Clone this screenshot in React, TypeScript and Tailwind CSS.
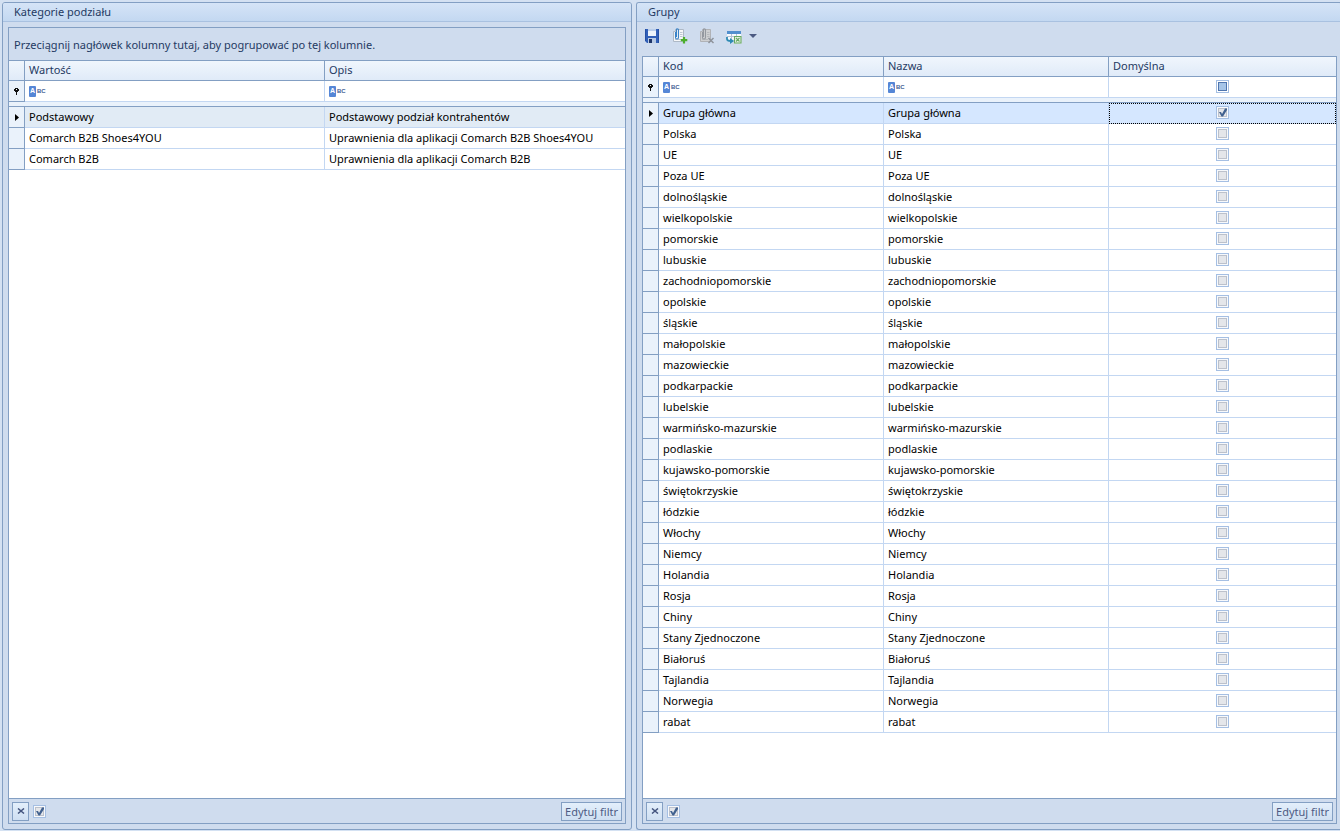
import type { ReactNode } from 'react'
import clsx from 'clsx'

const categories = [
  ['Podstawowy', 'Podstawowy podział kontrahentów'],
  ['Comarch B2B Shoes4YOU', 'Uprawnienia dla aplikacji Comarch B2B Shoes4YOU'],
  ['Comarch B2B', 'Uprawnienia dla aplikacji Comarch B2B'],
]

const groups = [
  'Grupa główna',
  'Polska',
  'UE',
  'Poza UE',
  'dolnośląskie',
  'wielkopolskie',
  'pomorskie',
  'lubuskie',
  'zachodniopomorskie',
  'opolskie',
  'śląskie',
  'małopolskie',
  'mazowieckie',
  'podkarpackie',
  'lubelskie',
  'warmińsko-mazurskie',
  'podlaskie',
  'kujawsko-pomorskie',
  'świętokrzyskie',
  'łódzkie',
  'Włochy',
  'Niemcy',
  'Holandia',
  'Rosja',
  'Chiny',
  'Stany Zjednoczone',
  'Białoruś',
  'Tajlandia',
  'Norwegia',
  'rabat',
]

function CheckBox({ label, checked, mixed }: { label: string; checked?: boolean; mixed?: boolean }) {
  return (
    <span className="relative block size-[13px]">
      <input
        type="checkbox"
        aria-label={label}
        defaultChecked={checked}
        className={clsx(
          'peer block size-[13px] appearance-none border border-[#a5bfe3]',
          mixed
            ? 'bg-[#a6c5e8] shadow-[inset_0_0_0_1px_#ffffff,inset_0_0_0_2px_#4f75ae]'
            : 'bg-[#e4e6ea] shadow-[inset_0_0_0_1px_#f7f9fc,inset_0_0_0_2px_#bcc1cb]',
        )}
      />
      <svg
        viewBox="0 0 13 13"
        className="pointer-events-none absolute inset-0 hidden size-[13px] peer-checked:block"
        aria-hidden="true"
      >
        <path d="M3 6h2l1 2 3-5.500h2V4l-4 6.500H5.500z" fill="#41618f" />
      </svg>
    </span>
  )
}

function PinIcon() {
  return (
    <svg viewBox="0 0 5 7" className="mx-auto h-[7px] w-[5px]" shapeRendering="crispEdges" aria-hidden="true">
      <path d="M1 0h3v1h1v2H4v1H3v3H2V4H1V3H0V1h1z" fill="#111" />
      <path d="M2 1h1v1H2z" fill="#fff" />
    </svg>
  )
}

function RowArrow() {
  return (
    <svg viewBox="0 0 4 7" className="mx-auto h-[7px] w-[4px]" aria-hidden="true">
      <path d="M0 0 4 3.500 0 7z" fill="#000" />
    </svg>
  )
}

function FilterCell({ label }: { label: string }) {
  return (
    <div className="flex items-center pl-1">
      <span className="flex h-[11px] w-[7px] items-center justify-center rounded-[1px] bg-[#5586d6] font-['Liberation_Sans'] text-[7px] font-bold text-white">
        A
      </span>
      <span className="pl-px font-['Liberation_Sans'] text-[6px] font-bold text-[#3f6094]">BC</span>
      <input aria-label={label} className="h-4 min-w-0 flex-1 bg-transparent px-1 outline-none" />
    </div>
  )
}

const indicator = 'border-r border-b border-[#839fc3] bg-[#eaf2fb] p-0'
const cell = 'border-b border-[#c3d7f2] p-0 pl-1'

function HeaderRow({ titles }: { titles: string[] }) {
  return (
    <tr className="h-5 bg-linear-to-b from-[#f0f6fd] to-[#dfeaf8] text-[#1f3a63]">
      <th className="border-r border-b border-[#839fc3] p-0" />
      {titles.map((title) => (
        <th
          key={title}
          scope="col"
          className="border-r border-b border-[#839fc3] p-0 pb-[2px] pl-1 text-left font-normal last:border-r-0"
        >
          {title}
        </th>
      ))}
    </tr>
  )
}

function GapRow({ span }: { span: number }) {
  return (
    <tr className="h-[5px]">
      <td colSpan={span} className="border-b border-[#839fc3] bg-[#eaf2fb] p-0" />
    </tr>
  )
}

function CategoryTable() {
  return (
    <table className="w-full table-fixed border-separate border-spacing-0 leading-4">
      <colgroup>
        <col className="w-4" />
        <col className="w-[300px]" />
        <col />
      </colgroup>
      <thead>
        <HeaderRow titles={['Wartość', 'Opis']} />
      </thead>
      <tbody>
        <tr className="h-[21px]">
          <td className={indicator}>
            <PinIcon />
          </td>
          <td className="border-r border-b border-[#c3d7f2] p-0">
            <FilterCell label="Filtr: Wartość" />
          </td>
          <td className="border-b border-[#c3d7f2] p-0">
            <FilterCell label="Filtr: Opis" />
          </td>
        </tr>
        <GapRow span={3} />
        {categories.map(([value, description], i) => (
          <tr key={value} className="h-[21px]">
            <td className={indicator}>{i === 0 && <RowArrow />}</td>
            <td className={clsx(cell, 'border-r', i === 0 && 'bg-[#e1ebf5]')}>{value}</td>
            <td className={clsx(cell, i === 0 && 'bg-[#e1ebf5]')}>{description}</td>
          </tr>
        ))}
      </tbody>
    </table>
  )
}

function GroupTable() {
  return (
    <table className="w-full table-fixed border-separate border-spacing-0 leading-4">
      <colgroup>
        <col className="w-4" />
        <col className="w-[225px]" />
        <col className="w-[225px]" />
        <col />
      </colgroup>
      <thead>
        <HeaderRow titles={['Kod', 'Nazwa', 'Domyślna']} />
      </thead>
      <tbody>
        <tr className="h-[21px]">
          <td className={indicator}>
            <PinIcon />
          </td>
          <td className="border-r border-b border-[#c3d7f2] p-0">
            <FilterCell label="Filtr: Kod" />
          </td>
          <td className="border-r border-b border-[#c3d7f2] p-0">
            <FilterCell label="Filtr: Nazwa" />
          </td>
          <td className="border-b border-[#c3d7f2] p-0 pb-px">
            <div className="flex justify-center">
              <CheckBox label="Filtr: Domyślna" mixed />
            </div>
          </td>
        </tr>
        <GapRow span={4} />
        {groups.map((name, i) => (
          <tr key={name} className="h-[21px]">
            <td className={indicator}>{i === 0 && <RowArrow />}</td>
            <td className={clsx(cell, 'border-r', i === 0 && 'bg-[#d5e7ff]')}>{name}</td>
            <td className={clsx(cell, 'border-r', i === 0 && 'bg-[#d5e7ff]')}>{name}</td>
            <td
              className={clsx(
                'border-b border-[#c3d7f2] p-0 pb-px',
                i === 0 && 'bg-[#d5e7ff] outline-1 -outline-offset-1 outline-dotted outline-black',
              )}
            >
              <div className="flex justify-center">
                <CheckBox label={`Domyślna: ${name}`} checked={i === 0} />
              </div>
            </td>
          </tr>
        ))}
      </tbody>
    </table>
  )
}

function FilterBar() {
  const button = 'border border-[#839fc3] bg-linear-to-b from-[#e3effb] to-[#cfdff2]'
  return (
    <div className="flex h-[25px] items-center border-t border-[#839fc3] bg-[#cfdcee] px-[3px]">
      <button type="button" aria-label="Wyczyść filtr" className={clsx(button, 'flex h-[19px] w-[17px] items-center justify-center')}>
        <svg viewBox="0 0 8 6" className="h-[6px] w-[8px]" aria-hidden="true">
          <path d="M1 .5 7 5.500M7 .5 1 5.500" stroke="#44557f" strokeWidth="1.500" />
        </svg>
      </button>
      <span className="ml-1">
        <CheckBox label="Filtr aktywny" checked />
      </span>
      <button type="button" className={clsx(button, 'ml-auto h-[19px] px-[3px] leading-[17px] text-[#4d5a83]')}>
        Edytuj filtr
      </button>
    </div>
  )
}

function Grid({ children }: { children: ReactNode }) {
  return (
    <div className="flex flex-1 flex-col border border-[#839fc3] bg-white">
      <div className="flex-1">{children}</div>
      <FilterBar />
    </div>
  )
}

function PageIcon({ fill, stroke, clip }: { fill: string; stroke: string; clip: string }) {
  return (
    <>
      <path d="M1.500 3.500h2v-2h8v12h-10z" fill={fill} stroke={stroke} />
      <path d="M8 4.500h2.500M8 6.500h2.500M8 8.500h2.500M3 11.500h6" stroke={stroke} strokeWidth=".8" />
      <path
        d="M3.500 4v5.500q0 1.500 1.500 1.500t1.500-1.500V2q0-1.200-1.200-1.200T4.500 2v7"
        fill="none"
        stroke={clip}
        strokeWidth="1.100"
      />
    </>
  )
}

function Toolbar() {
  return (
    <div className="flex h-[34px] items-start pt-[6px] pl-[7px]" role="toolbar" aria-label="Grupy">
      <button type="button" aria-label="Zapisz" className="mr-3">
        <svg viewBox="0 0 16 16" className="size-4">
          <path d="M1 1h14v14H3l-2-2z" fill="#3260b8" />
          <path d="M4 1h8v7H4z" fill="#eef4fb" />
          <path d="M4 1h8v2H4z" fill="#b9cdea" />
          <path d="M4 10h8v5H4z" fill="#b8cae4" />
          <path d="M5 11h3v4H5z" fill="#1e3568" />
          <path d="M1.500 1v12M14.500 1v14" stroke="#2450a5" />
        </svg>
      </button>
      <button type="button" aria-label="Dodaj" className="mr-[11px]">
        <svg viewBox="0 0 16 16" className="size-4">
          <PageIcon fill="#f6f7f8" stroke="#aeb9c6" clip="#3a83c8" />
          <path d="M12 9v6.500M8.800 12.200h6.500" stroke="#4cae2c" strokeWidth="2.200" />
        </svg>
      </button>
      <button type="button" aria-label="Usuń" disabled className="mr-[11px]">
        <svg viewBox="0 0 16 16" className="size-4">
          <PageIcon fill="#cfd0d2" stroke="#b0b2b6" clip="#94989f" />
          <path d="m9.500 10 5 5m0-5-5 5" stroke="#8e939b" strokeWidth="1.500" />
        </svg>
      </button>
      <button type="button" aria-label="Eksportuj" className="flex items-center">
        <svg viewBox="0 0 16 16" className="size-4">
          <path d="M1 3h14v9H1z" fill="#f7fafd" />
          <path d="M1 3h14v3H1z" fill="#528fce" />
          <path d="M1 8.500h14M5.500 6v6M10.500 6v6" stroke="#b3c1d4" />
          <path d="M8 8h7.500v7.500H8z" fill="#e8f3e5" />
          <path d="M8.500 8.500h6.500v6.500H8.500zM10 10l3.500 3.500m0-3.500L10 13.500" fill="none" stroke="#67a863" strokeWidth="1.100" />
          <path d="M1 9v2q0 2 4 2" fill="none" stroke="#2e8bb4" strokeWidth="1.800" />
          <path d="m4 10 4 3-4 3z" fill="#2e8bb4" />
        </svg>
        <svg viewBox="0 0 8 4" className="ml-[7px] h-[4px] w-[8px]">
          <path d="M0 0h8L4 4z" fill="#4c5a82" />
        </svg>
      </button>
    </div>
  )
}

function PanelTitle({ children }: { children: ReactNode }) {
  return (
    <h2 className="h-[19px] rounded-t-[2px] border-b border-[#a9c1e0] bg-linear-to-b from-[#d5e4f7] to-[#c3d8f1] pl-[11px] leading-[18px] text-[#1f3a63]">
      {children}
    </h2>
  )
}

export default function App() {
  return (
    <main className="grid min-h-screen grid-cols-[630fr_704fr] gap-1 bg-[#d4e1f2] pt-[2px] pb-px pl-[2px] font-['Noto_Sans',sans-serif] text-[11px] text-black">
      <section className="flex min-w-0 flex-col rounded-[3px] border border-[#839fc3] bg-[#cfdcee]">
        <PanelTitle>Kategorie podziału</PanelTitle>
        <div className="flex flex-1 flex-col p-[5px]">
          <Grid>
            <p className="h-[33px] border-b border-[#839fc3] bg-[#cfdcee] pl-[5px] leading-[34px] text-[#1f3a63]">
              Przeciągnij nagłówek kolumny tutaj, aby pogrupować po tej kolumnie.
            </p>
            <CategoryTable />
          </Grid>
        </div>
      </section>
      <section className="flex min-w-0 flex-col rounded-l-[3px] border border-r-0 border-[#839fc3] bg-[#cfdcee]">
        <PanelTitle>Grupy</PanelTitle>
        <Toolbar />
        <div className="flex flex-1 flex-col pr-[3px] pb-[5px] pl-[5px]">
          <Grid>
            <GroupTable />
          </Grid>
        </div>
      </section>
    </main>
  )
}
